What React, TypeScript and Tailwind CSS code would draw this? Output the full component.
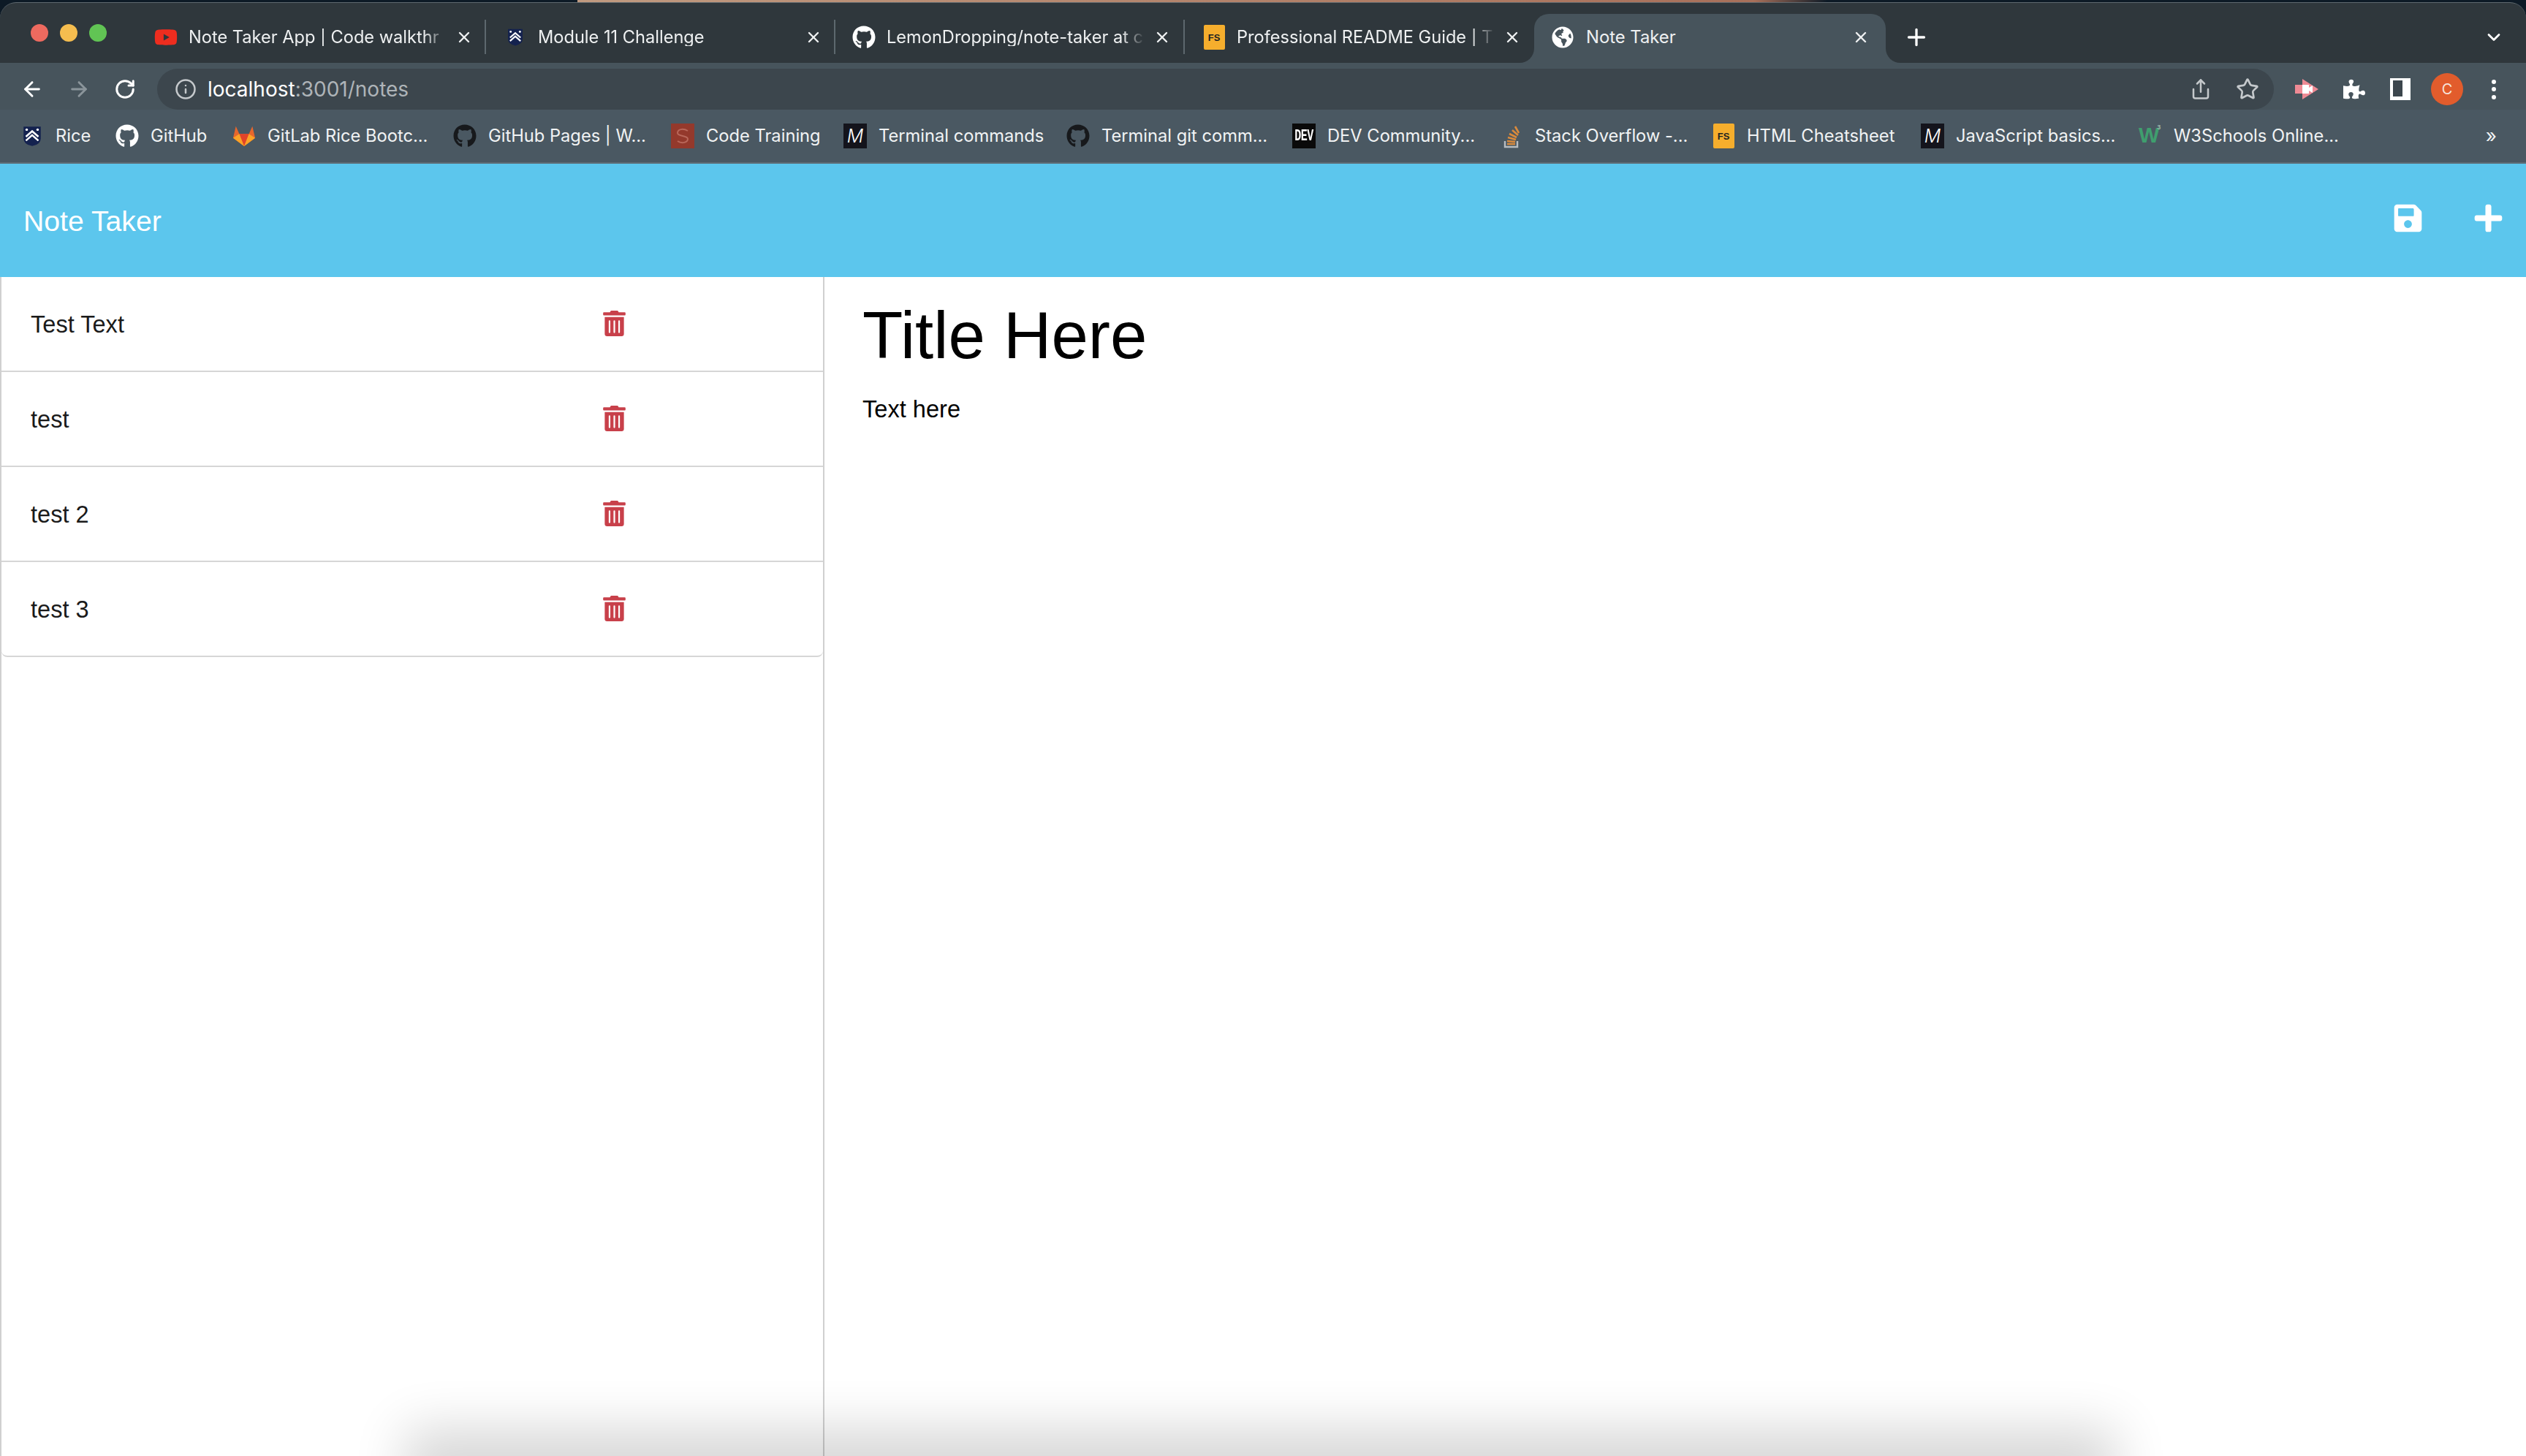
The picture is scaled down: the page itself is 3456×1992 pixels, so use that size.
import React from "react";
import { FaGithub, FaYoutube, FaGlobeAmericas, FaTrashAlt, FaSave, FaPlus, FaPuzzlePiece } from "react-icons/fa";
import { LuArrowLeft, LuArrowRight, LuRotateCw, LuInfo, LuShare, LuStar, LuX, LuPlus, LuChevronDown } from "react-icons/lu";

const Rice = ({ s = 26 }: { s?: number }) => (
  <svg width={s} height={s * 1.15} viewBox="0 0 24 28">
    <path d="M1 2 H23 V17 Q23 25 12 27 Q1 25 1 17 Z" fill="#14224f" />
    <path d="M4 15 L12 8 L20 15 M4 20 L12 13 L20 20" stroke="#fff" strokeWidth="2.4" fill="none" />
    <circle cx="5" cy="6" r="1.6" fill="#fff" /><circle cx="19" cy="6" r="1.6" fill="#fff" />
  </svg>
);
const GitLab = () => (
  <svg width="34" height="32" viewBox="0 0 34 32">
    <path d="M17 31 L1 19 L5 2 L10 13 H24 L29 2 L33 19 Z" fill="#e8672c" />
    <path d="M17 31 L10 13 H24 Z" fill="#e24329" />
    <path d="M17 31 L1 19 L10 13 Z M17 31 L33 19 L24 13 Z" fill="#fca326" />
  </svg>
);
const CodeTraining = () => (
  <div className="w-[32px] h-[34px] bg-[#94392c] flex items-center justify-center">
    <svg width="24" height="24" viewBox="0 0 24 24" fill="none" stroke="#b9675a" strokeWidth="2">
      <path d="M19 5 C12 1 5 3 5 8 C5 13 19 11 19 16 C19 21 11 23 5 19" />
    </svg>
  </div>
);
const MLogo = () => (
  <div className="w-[32px] h-[34px] bg-[#14141c] flex items-center justify-center text-white italic font-light text-[25px] leading-none [font-family:Inter,sans-serif]">M</div>
);
const Dev = () => (
  <div className="w-[32px] h-[34px] bg-[#0a0a0a] flex items-center justify-center text-white font-bold text-[15px] tracking-[-0.5px] leading-none [font-family:'Liberation_Mono',monospace]">
    <span className="scale-y-150">DEV</span>
  </div>
);
const FS = () => (
  <div className="w-[29px] h-[34px] bg-[#f6ae2d] rounded-[2px] flex items-center justify-center text-[#222] font-bold text-[13px] leading-none [font-family:'Liberation_Sans',sans-serif]">FS</div>
);
const SO = () => (
  <svg width="24" height="34" viewBox="0 0 24 34" fill="none">
    <path d="M3 24 V32 H20 V24" stroke="#b8bcc0" strokeWidth="2.4" />
    <path d="M6 28 H17 M6 24 L17 25 M7 19 L18 22 M9 14 L19 19 M13 9 L21 16 M17 4 L22 13" stroke="#d98a3c" strokeWidth="2.6" />
  </svg>
);
const W3 = () => (
  <div className="w-[32px] h-[32px] flex items-start text-[#3f9e6e] font-bold text-[30px] leading-none [font-family:'Liberation_Sans',sans-serif]">
    W<span className="text-[9px] -ml-[3px] text-[#9fb8ac]">3</span>
  </div>
);

const tabs = [
  { t: "Note Taker App | Code walkthr", icon: <FaYoutube size={32} color="#ee2d1f" />, left: "w-[32px] ml-[24px]" },
  { t: "Module 11 Challenge", icon: <Rice s={22} />, left: "w-[32px] ml-[24px]" },
  { t: "LemonDropping/note-taker at c", icon: <FaGithub size={32} color="#fff" />, left: "w-[32px] ml-[23px]" },
  { t: "Professional README Guide | T", icon: <FS />, left: "w-[32px] ml-[24px]" },
];

const bookmarks = [
  { t: "Rice", i: <Rice />, w: "w-[130px]" },
  { t: "GitHub", i: <FaGithub size={32} color="#fff" />, w: "w-[160px]" },
  { t: "GitLab Rice Bootc...", i: <GitLab />, w: "w-[302px]" },
  { t: "GitHub Pages | W...", i: <FaGithub size={32} color="#17191c" />, w: "w-[298px]" },
  { t: "Code Training", i: <CodeTraining />, w: "w-[236px]" },
  { t: "Terminal commands", i: <MLogo />, w: "w-[305px]" },
  { t: "Terminal git comm...", i: <FaGithub size={32} color="#17191c" />, w: "w-[309px]" },
  { t: "DEV Community...", i: <Dev />, w: "w-[284px]" },
  { t: "Stack Overflow -...", i: <SO />, w: "w-[290px]" },
  { t: "HTML Cheatsheet", i: <FS />, w: "w-[286px]" },
  { t: "JavaScript basics...", i: <MLogo />, w: "w-[298px]" },
  { t: "W3Schools Online...", i: <W3 />, w: "w-[300px]" },
];

const notes = ["Test Text", "test", "test 2", "test 3"];

export default function App() {
  return (
    <div className="relative w-[3456px] h-[1992px] overflow-hidden flex flex-col bg-white [font-family:'Liberation_Sans',sans-serif]">
      {/* desktop strip behind the window */}
      <div className="h-[3px] bg-[linear-gradient(to_right,#0d1a26_0,#0d1a26_790px,#c09a80_790px,#a8705a_2400px,#0d1a26_2500px)]" />
      <div className="bg-[#0d1a26]">
        {/* tab strip */}
        <div className="relative h-[83px] rounded-t-[22px] bg-[#2f373c] border-t border-[#5f696f] flex items-end [font-family:Inter,sans-serif] text-[#eef0f1]">
          <div className="w-[187px] h-full flex gap-[16px] pl-[42px] pt-[29px]">
            <span className="w-[24px] h-[24px] rounded-full bg-[#ee6a5f]" />
            <span className="w-[24px] h-[24px] rounded-full bg-[#f5bd4f]" />
            <span className="w-[24px] h-[24px] rounded-full bg-[#61c454]" />
          </div>
          {tabs.map((tab, i) => (
            <div key={tab.t} className="relative w-[478px] h-[67px] flex items-center pb-[3px]">
              <div className={`${tab.left} h-[32px] flex items-center justify-center shrink-0`}>{tab.icon}</div>
              <div className="ml-[15px] w-[357px] overflow-hidden whitespace-nowrap text-[23.6px] leading-none [mask-image:linear-gradient(to_right,black_90%,transparent_99%)]">{tab.t}</div>
              <LuX size={24} strokeWidth={2.4} className="ml-[8px] shrink-0" />
              {i < 3 && <span className="absolute right-0 top-[8px] bottom-[12px] w-[2px] bg-[#5d686e]" />}
            </div>
          ))}
          <div className="relative w-[481px] h-[67px] bg-[#47545c] rounded-t-[20px] flex items-center pb-[3px]">
            <span className="absolute -left-[20px] bottom-0 w-[20px] h-[20px] bg-[#47545c]"><span className="block w-full h-full bg-[#2f373c] rounded-br-[20px]" /></span>
            <span className="absolute -right-[20px] bottom-0 w-[20px] h-[20px] bg-[#47545c]"><span className="block w-full h-full bg-[#2f373c] rounded-bl-[20px]" /></span>
            <FaGlobeAmericas size={30} color="#fff" className="ml-[24px] shrink-0" />
            <div className="ml-[17px] w-[364px] text-[23.8px] leading-none">Note Taker</div>
            <LuX size={24} strokeWidth={2.4} className="shrink-0" />
          </div>
          <div className="ml-[24px] h-[67px] flex items-center pb-[3px]"><LuPlus size={36} strokeWidth={2.2} color="#fff" /></div>
          <div className="ml-auto mr-[30px] h-[67px] flex items-center pb-[3px]"><LuChevronDown size={28} strokeWidth={2.4} color="#fff" /></div>
        </div>
      </div>

      {/* toolbar */}
      <div className="h-[64px] bg-[#47545c] flex items-center [font-family:Inter,sans-serif] text-white pt-[8px]">
        <div className="w-[215px] flex items-center pl-[28px] gap-[32px]">
          <LuArrowLeft size={32} strokeWidth={2.2} />
          <LuArrowRight size={32} strokeWidth={2.2} className="text-[#8b959b]" />
          <LuRotateCw size={30} strokeWidth={2.4} />
        </div>
        <div className="w-[2896px] h-[56px] rounded-full bg-[#3c464d] flex items-center pl-[24px] pr-[20px]">
          <LuInfo size={30} strokeWidth={2} className="text-[#c5c9cc]" />
          <div className="ml-[15px] text-[28px] leading-none whitespace-nowrap">localhost<span className="text-[#aeb4b8]">:3001/notes</span></div>
          <LuShare size={30} strokeWidth={2} className="ml-auto text-[#c5c9cc]" />
          <LuStar size={32} strokeWidth={2} className="ml-[33px] text-[#c5c9cc]" />
        </div>
        <div className="flex items-center">
          <svg width="32" height="28" viewBox="0 0 32 28" className="ml-[29px]">
            <path d="M0 8 H10 V0 L32 14 L10 28 V20 H0 Z" fill="#ef8a94" />
            <path d="M10 8 H19 V12 L24 9 V19 L19 16 V20 H10 Z" fill="#fff" />
          </svg>
          <FaPuzzlePiece size={30} color="#fff" className="ml-[34px]" />
          <div className="ml-[34px] w-[28px] h-[30px] bg-white pl-[4px] pt-[3px] pb-[5px] pr-[11px]">
            <div className="w-full h-full bg-[#3c464d]" />
          </div>
          <div className="ml-[28px] w-[44px] h-[44px] rounded-full bg-[#e25c2c] flex items-center justify-center text-[20px] text-[#f7e4da]">C</div>
          <div className="ml-[39px] flex flex-col gap-[4.5px]">
            <span className="w-[6px] h-[6px] rounded-full bg-white" /><span className="w-[6px] h-[6px] rounded-full bg-white" /><span className="w-[6px] h-[6px] rounded-full bg-white" />
          </div>
        </div>
      </div>

      {/* bookmarks */}
      <div className="h-[74px] bg-[#4a5862] border-b-[2px] border-[#5e6d76] flex items-center pl-[28px] [font-family:Inter,sans-serif] text-[#f1f3f4]">
        {bookmarks.map((b) => (
          <div key={b.t} className={`${b.w} shrink-0 flex items-center`}>
            <div className="w-[32px] h-[36px] flex items-center justify-center shrink-0">{b.i}</div>
            <span className="ml-[1px] pl-[15px] text-[23.7px] leading-none whitespace-nowrap">{b.t}</span>
          </div>
        ))}
        <span className="ml-auto mr-[40px] text-[26px] leading-none">»</span>
      </div>

      {/* header */}
      <div className="h-[155px] bg-[#5cc6ed] flex items-center px-[29px] text-white">
        <div className="text-[39.2px] leading-none mt-[2px] pl-[3px]">Note Taker</div>
        <FaSave size={43} className="ml-auto mr-[68px] -mt-[6px]" />
        <FaPlus size={43} className="-mt-[6px] -translate-x-[1px]" />
      </div>

      {/* body */}
      <div className="flex-1 flex min-h-0">
        <div className="w-[1128px] border-r-2 border-l-2 border-[#d0d0d0] shrink-0">
          {notes.map((n, i) => (
            <div key={n} className={`h-[130px] border-b-[2px] border-[#d6d6d6] flex items-center pl-[40px] ${i === 3 ? "rounded-b-[8px]" : ""}`}>
              <div className="w-[781px] text-[32.6px] leading-none text-[#1a1a1a] mt-[2px]">{n}</div>
              <FaTrashAlt size={35} color="#c8404a" className="-mt-[2px]" />
            </div>
          ))}
        </div>
        <div className="flex-1 pl-[52px] pt-[28px]">
          <div className="text-[90.6px] leading-[104px] text-black">Title Here</div>
          <div className="mt-[29px] text-[32.6px] leading-[40px] text-black">Text here</div>
        </div>
      </div>

      {/* soft shadow rising from the lower window edge */}
      <div className="absolute left-[600px] w-[2250px] top-[2000px] h-[10px] shadow-[0_0_70px_45px_rgba(0,0,0,0.16)]" />
    </div>
  );
}
